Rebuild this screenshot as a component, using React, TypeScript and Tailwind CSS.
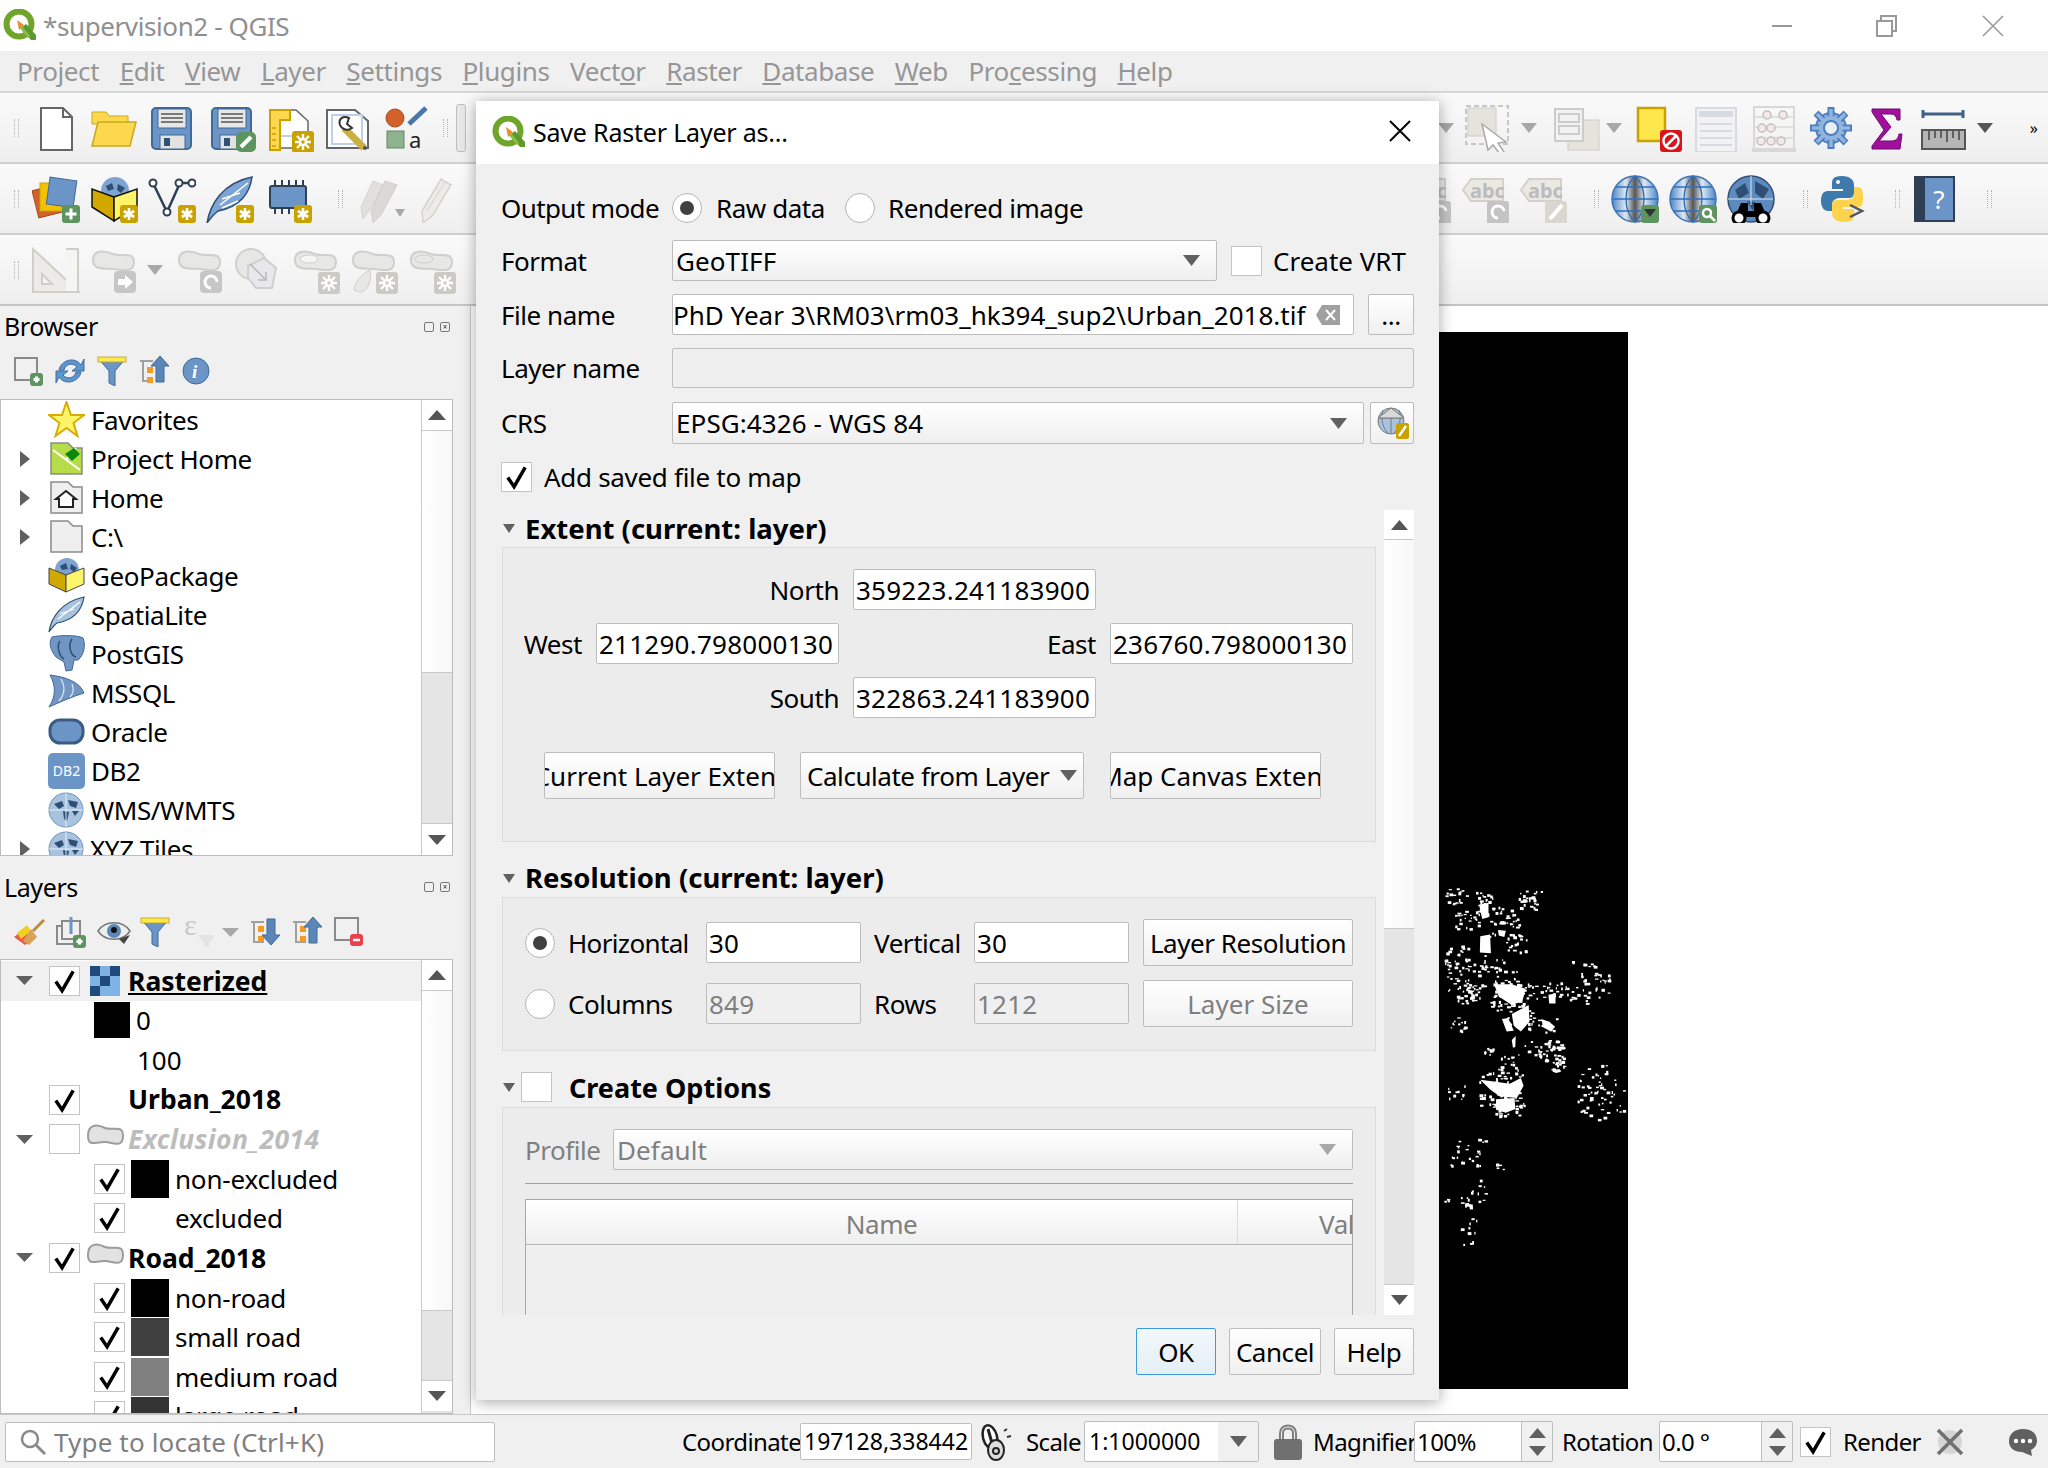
import type { ReactNode } from "react";

const FONT = "font-['Noto_Sans','Open_Sans',sans-serif]";

function Ic({ w = 48, h = 48, children, className = "" }: { w?: number; h?: number; children: ReactNode; className?: string }) {
  return (
    <svg width={w} height={h} viewBox={`0 0 ${w} ${h}`} className={`shrink-0 ${className}`} aria-hidden>
      {children}
    </svg>
  );
}

function Check({ size = 30 }: { size?: number }) {
  return (
    <svg width={size} height={size} viewBox="0 0 30 30" aria-hidden>
      <path d="M6 15.5L12.5 25L24 5" fill="none" stroke="#000" strokeWidth="3.6" />
    </svg>
  );
}

function CheckBox({ checked = false, className = "" }: { checked?: boolean; className?: string }) {
  return (
    <div className={`flex h-[30px] w-[31px] shrink-0 items-center justify-center border border-[#c4c4c4] bg-white ${className}`}>
      {checked && <Check />}
    </div>
  );
}

function Radio({ on = false }: { on?: boolean }) {
  return (
    <div className="flex h-[30px] w-[30px] shrink-0 items-center justify-center rounded-full border border-[#b5b5b5] bg-white">
      {on && <div className="h-[14px] w-[14px] rounded-full bg-[#404040]" />}
    </div>
  );
}

function Tri({ dir = "down", color = "#666", w = 16, h = 10 }: { dir?: "down" | "up" | "right"; color?: string; w?: number; h?: number }) {
  const pts = dir === "down" ? `0,0 ${w},0 ${w / 2},${h}` : dir === "up" ? `0,${h} ${w},${h} ${w / 2},0` : `0,0 ${w},${h / 2} 0,${h}`;
  return (
    <svg width={w} height={h} viewBox={`0 0 ${w} ${h}`} className="shrink-0" aria-hidden>
      <polygon points={pts} fill={color} />
    </svg>
  );
}

function Handle({ className = "" }: { className?: string }) {
  return <div className={`h-[18px] w-[5px] shrink-0 border-x border-dotted border-[#b5b5b5] ${className}`} />;
}

function QLogo({ size = 34 }: { size?: number }) {
  return (
    <svg width={size} height={size} viewBox="0 0 34 34" className="shrink-0" aria-hidden>
      <circle cx="16" cy="15" r="12.5" fill="none" stroke="#6fa52a" strokeWidth="6" />
      <path d="M18 19L28 31L33 31L33 26L23 15Z" fill="#5c9a2e" />
      <path d="M14 11L21 16L16 21Z" fill="#ef8c2c" />
      <path d="M18 18L26 28" stroke="#8dbb4a" strokeWidth="3" />
    </svg>
  );
}

function StarBadge({ x = 30, y = 30 }: { x?: number; y?: number }) {
  return (
    <g transform={`translate(${x} ${y})`}>
      <rect width="18" height="18" rx="3" fill="#c9a200" />
      <path d="M9 3V15M3.8 6L14.2 12M14.2 6L3.8 12" stroke="#fff" strokeWidth="2.6" />
    </g>
  );
}

function GearBadge({ x = 26, y = 26, bg = "#c9a200", size = 22 }: { x?: number; y?: number; bg?: string; size?: number }) {
  const c = size / 2;
  return (
    <g transform={`translate(${x} ${y})`}>
      <rect width={size} height={size} rx="3" fill={bg} />
      <path d={`M${c} 3V${size - 3}M3 ${c}H${size - 3}M5 5L${size - 5} ${size - 5}M${size - 5} 5L5 ${size - 5}`} stroke="#fff" strokeWidth="2.4" />
      <circle cx={c} cy={c} r="4" fill="#fff" />
      <circle cx={c} cy={c} r="1.8" fill={bg} />
    </g>
  );
}

function PlusBadge({ x = 30, y = 30, size = 18 }: { x?: number; y?: number; size?: number }) {
  const c = size / 2;
  return (
    <g transform={`translate(${x} ${y})`}>
      <rect width={size} height={size} rx="3" fill="#5e9460" />
      <path d={`M${c} 3.5V${size - 3.5}M3.5 ${c}H${size - 3.5}`} stroke="#fff" strokeWidth="3" />
    </g>
  );
}

function Floppy({ badge = false }: { badge?: boolean }) {
  return (
    <Ic>
      <rect x="4" y="4" width="39" height="41" rx="4" fill="#6b95c6" stroke="#3f6a99" strokeWidth="2" />
      <rect x="10" y="5" width="28" height="19" fill="#e8e8e8" stroke="#3f6a99" />
      <path d="M13 10H35M13 14H35M13 18H35" stroke="#555" strokeWidth="1.6" />
      <rect x="12" y="31" width="25" height="14" fill="#e2e2e2" stroke="#3f6a99" />
      <rect x="16" y="34" width="6" height="8" fill="#2f527a" />
      {badge && (
        <g>
          <rect x="28" y="28" width="20" height="20" rx="5" fill="#5e9460" />
          <path d="M33 43L43 33" stroke="#fff" strokeWidth="4" />
        </g>
      )}
    </Ic>
  );
}

function Blob({ fill = "#e7e7e5", stroke = "#cfcfcd", children }: { fill?: string; stroke?: string; children?: ReactNode }) {
  return (
    <Ic>
      <path d="M3 14C3 4 14 4 23 8C31 11 44 5 44 16C44 27 33 24 25 23C15 22 3 25 3 14Z" fill={fill} stroke={stroke} strokeWidth="2" />
      {children}
    </Ic>
  );
}

function Globe({ id, badge }: { id: string; badge?: ReactNode }) {
  return (
    <Ic>
      <defs>
        <linearGradient id={id} x1="0" x2="1">
          <stop offset="0" stopColor="#4c86c6" />
          <stop offset="0.3" stopColor="#dfe9f2" />
          <stop offset="0.5" stopColor="#555" />
          <stop offset="0.7" stopColor="#dfe9f2" />
          <stop offset="1" stopColor="#4c86c6" />
        </linearGradient>
      </defs>
      <circle cx="24" cy="24" r="23" fill={`url(#${id})`} stroke="#3f74b4" strokeWidth="1.5" />
      <path d="M24 1C12 12 12 36 24 47C36 36 36 12 24 1ZM2 24H46M5 12H43M5 36H43" fill="none" stroke="#2f6fc0" strokeWidth="1.4" />
      {badge}
    </Ic>
  );
}

function MapGlobe({ s = 28 }: { s?: number }) {
  return (
    <svg width={s} height={s} viewBox="0 0 36 36" className="shrink-0" aria-hidden>
      <circle cx="18" cy="18" r="17" fill="#a7c3e0" stroke="#6f93ba" />
      <path d="M6 12L14 9L16 14L11 17ZM20 8L30 10L28 16L22 14ZM15 19L21 20L19 29L16 27ZM24 19L31 19L27 24Z" fill="#2f4f75" />
      <path d="M18 1V35M1 18H35" stroke="#e4edf6" strokeWidth="1" />
    </svg>
  );
}

function Row1Left() {
  return (
    <>
      <Handle className="ml-[14px]" />
      <div className="ml-[13px] flex gap-[10px]">
        <Ic>
          <path d="M9 4H31L40 13V46H9Z" fill="#fff" stroke="#666" strokeWidth="2" />
          <path d="M31 4V13H40" fill="none" stroke="#666" strokeWidth="2" />
        </Ic>
        <Ic>
          <path d="M2 8H16L19 12H38V20H2Z" fill="#fdd84f" stroke="#c9a91a" />
          <path d="M2 42L8 18H46L40 42Z" fill="#fdd84f" stroke="#c9a91a" strokeWidth="1.5" />
        </Ic>
        <Floppy />
        <div className="ml-[2px]">
          <Floppy badge />
        </div>
        <Ic>
          <path d="M4 6H30L42 17V44H4Z" fill="#fff" stroke="#666" strokeWidth="1.5" />
          <path d="M8 32H36" stroke="#bcd0ee" strokeWidth="2" />
          <path d="M4 6H24V16H14V46H4Z" fill="#fdd84f" stroke="#c9a200" strokeWidth="2" />
          <path d="M6 24H10M6 30H10M6 36H10M6 42H10" stroke="#c9a200" strokeWidth="1.5" />
          <GearBadge x={26} y={27} />
        </Ic>
        <Ic>
          <path d="M3 6H31L44 17V44H3Z" fill="#fff" stroke="#666" strokeWidth="2" />
          <rect x="8" y="11" width="30" height="29" fill="none" stroke="#bcd0ee" strokeWidth="2" />
          <path d="M20 24L40 44" stroke="#c9b040" strokeWidth="7" />
          <path d="M25 14C19 11 14 15 16 21C18 26 24 27 28 24L23 20L25 14Z" fill="#fff" stroke="#333" strokeWidth="2" />
          <circle cx="41" cy="44" r="2" fill="#555" />
        </Ic>
        <Ic>
          <circle cx="13" cy="14" r="9" fill="#d2622c" stroke="#a94c1f" />
          <path d="M27 20L44 4" stroke="#4a76ab" strokeWidth="5" />
          <rect x="5" y="27" width="17" height="17" fill="#8fb38f" stroke="#5e8a5e" />
          <text x="27" y="44" fontSize="22" fontFamily="Noto Sans" fill="#222">a</text>
        </Ic>
      </div>
      <Handle className="ml-[13px]" />
      <div className="ml-[8px] h-[48px] w-[10px] rounded-[3px] border border-[#bdbdbd] bg-[#e8e8e8]" />
    </>
  );
}

function Row1Right() {
  return (
    <div className="ml-auto mr-[10px] flex items-center">
      <Tri color="#a8a8a8" />
      <div className="ml-[10px]">
        <Ic>
          <rect x="2" y="2" width="42" height="38" fill="none" stroke="#c7c7c7" strokeWidth="2" strokeDasharray="5 3" />
          <rect x="4" y="4" width="28" height="28" fill="#e4e3dc" stroke="#ccc" />
          <path d="M18 20L42 38L34 39L40 48L36 50L29 41L24 46Z" fill="#fff" stroke="#aaa" strokeWidth="1.5" />
        </Ic>
      </div>
      <div className="ml-[9px]">
        <Tri color="#a8a8a8" />
      </div>
      <div className="ml-[16px]">
        <Ic>
          <rect x="15" y="16" width="31" height="30" fill="#e4e3dc" stroke="#ccc" />
          <rect x="2" y="5" width="28" height="32" fill="#f2f2f2" stroke="#ccc" strokeWidth="2" />
          <rect x="6" y="10" width="20" height="8" fill="none" stroke="#ccc" strokeWidth="2" />
          <rect x="6" y="22" width="20" height="8" fill="none" stroke="#ccc" strokeWidth="2" />
        </Ic>
      </div>
      <div className="ml-[5px]">
        <Tri color="#a8a8a8" />
      </div>
      <div className="ml-[14px]">
        <Ic>
          <rect x="2" y="4" width="27" height="33" fill="#fde74c" stroke="#c9a200" strokeWidth="2.5" />
          <rect x="24" y="26" width="22" height="22" rx="3" fill="#d8141c" />
          <circle cx="35" cy="37" r="7.5" fill="none" stroke="#fff" strokeWidth="2.5" />
          <path d="M30 42L40 32" stroke="#fff" strokeWidth="2.5" />
        </Ic>
      </div>
      <div className="ml-[8px]">
        <Ic>
          <rect x="4" y="4" width="40" height="44" fill="#f2f2f2" stroke="#d5dbe0" strokeWidth="2" />
          <rect x="7" y="7" width="34" height="6" fill="#d5dbe0" />
          <path d="M8 20H40M8 27H40M8 34H40M8 41H40" stroke="#d5dbe0" strokeWidth="2" />
        </Ic>
      </div>
      <div className="ml-[11px]">
        <Ic>
          <rect x="3" y="3" width="40" height="42" fill="none" stroke="#d8d8d8" strokeWidth="2" />
          <path d="M3 13H43M3 23H43M3 34H43" stroke="#d8d8d8" strokeWidth="1.5" />
          <circle cx="16" cy="11" r="4" fill="#f0eaea" stroke="#c9bcbc" strokeWidth="1.5" />
          <circle cx="32" cy="11" r="4" fill="#f0eaea" stroke="#c9bcbc" strokeWidth="1.5" />
          <circle cx="11" cy="24" r="4" fill="#f0eaea" stroke="#c9bcbc" strokeWidth="1.5" />
          <circle cx="20" cy="24" r="4" fill="#f0eaea" stroke="#c9bcbc" strokeWidth="1.5" />
          <circle cx="10" cy="37" r="4" fill="#f0eaea" stroke="#c9bcbc" strokeWidth="1.5" />
          <circle cx="20" cy="37" r="4" fill="#f0eaea" stroke="#c9bcbc" strokeWidth="1.5" />
          <circle cx="30" cy="37" r="4" fill="#f0eaea" stroke="#c9bcbc" strokeWidth="1.5" />
          <rect x="1" y="44" width="44" height="4" fill="#d8d8d8" />
        </Ic>
      </div>
      <div className="ml-[8px]">
        <Ic>
          <circle cx="24" cy="24" r="15" fill="#91b5e0" stroke="#4d7fbd" strokeWidth="2" />
          <path d="M24 3V45M3 24H45M9 9L39 39M39 9L9 39" stroke="#4d7fbd" strokeWidth="7" />
          <path d="M24 5V43M5 24H43M10 10L38 38M38 10L10 38" stroke="#91b5e0" strokeWidth="3.5" />
          <circle cx="24" cy="24" r="12" fill="#91b5e0" />
          <circle cx="24" cy="24" r="7" fill="#e8eef6" stroke="#4d7fbd" strokeWidth="2" />
        </Ic>
      </div>
      <div className="ml-[14px]">
        <Ic w={36}>
          <path d="M3 5H31V16H28C27 11 25 10 20 10H12L22 23L10 37H22C27 37 29 35 30 30H33L31 45H3V42L15 26L3 8Z" fill="#a0109c" stroke="#6e0a6c" />
        </Ic>
      </div>
      <div className="ml-[14px]">
        <Ic>
          <path d="M4 6V14M44 6V14M4 10H44" stroke="#3f6185" strokeWidth="3" />
          <rect x="3" y="26" width="43" height="19" fill="#b5b5b5" stroke="#555" strokeWidth="2" />
          <path d="M10 27V36M16 27V34M22 27V34M28 27V38M34 27V34M40 27V36" stroke="#444" strokeWidth="1.5" />
        </Ic>
      </div>
      <div className="ml-[10px]">
        <Tri color="#555" />
      </div>
      <span className="ml-[37px] text-[16px] leading-none text-black">»</span>
    </div>
  );
}

function Row2Left() {
  return (
    <>
      <Handle className="ml-[14px]" />
      <div className="ml-[13px] flex gap-[10px]">
        <Ic>
          <rect x="3" y="12" width="28" height="28" fill="#d2622c" stroke="#a94c1f" transform="rotate(-14 17 26)" />
          <rect x="8" y="8" width="28" height="28" fill="#f2c200" stroke="#c9a200" />
          <rect x="16" y="4" width="27" height="27" fill="#6b95c6" stroke="#3f6a99" transform="rotate(8 30 18)" />
          <PlusBadge x={30} y={30} />
        </Ic>
        <Ic>
          <circle cx="25" cy="16" r="14" fill="#7da4d2" />
          <path d="M16 11L22 8L24 14L18 16ZM28 9L35 13L31 18L27 15Z" fill="#2f4f75" />
          <path d="M24 22L2 14V32L24 46Z" fill="#d1a800" stroke="#111" strokeWidth="1.5" />
          <path d="M24 22L47 14V32L24 46Z" fill="#fdf46a" stroke="#111" strokeWidth="1.5" />
          <StarBadge x={30} y={30} />
        </Ic>
        <Ic>
          <path d="M5 8L19 37L32 8L46 8" fill="none" stroke="#2f3f55" strokeWidth="2.5" />
          <circle cx="5" cy="8" r="3.5" fill="#fff" stroke="#2f3f55" strokeWidth="2" />
          <circle cx="19" cy="37" r="3.5" fill="#fff" stroke="#2f3f55" strokeWidth="2" />
          <circle cx="31" cy="8" r="3.5" fill="#fff" stroke="#2f3f55" strokeWidth="2" />
          <circle cx="44" cy="8" r="3.5" fill="#fff" stroke="#2f3f55" strokeWidth="2" />
          <StarBadge x={30} y={30} />
        </Ic>
        <Ic>
          <path d="M1 48C4 30 16 8 46 2C44 18 34 32 12 36C8 39 5 42 1 48Z" fill="#7da4d2" stroke="#2f4f75" strokeWidth="1.5" />
          <path d="M14 30L42 8M16 24L34 18M16 33L32 26" stroke="#fff" strokeWidth="1.5" />
          <StarBadge x={30} y={30} />
        </Ic>
        <Ic>
          <rect x="6" y="11" width="36" height="22" rx="2" fill="#6b95c6" stroke="#2f3f55" strokeWidth="2" />
          <path d="M11 5V11M18 5V11M25 5V11M32 5V11M39 5V11M11 33V39M18 33V39M25 33V39" stroke="#2f3f55" strokeWidth="2" />
          <StarBadge x={30} y={30} />
        </Ic>
      </div>
      <Handle className="ml-[26px]" />
      <div className="ml-[14px]">
        <Ic>
          <path d="M6 44L4 32L16 6L26 10L12 36Z" fill="#e2e0dc" stroke="#d5d3cf" />
          <path d="M16 48L14 36L28 6L40 10L24 40Z" fill="#dbd9d5" stroke="#d0cecb" />
          <path d="M38 34H48L43 42Z" fill="#a8a8a8" />
        </Ic>
      </div>
      <div className="ml-[14px]">
        <Ic w={36}>
          <path d="M4 48L3 36L22 4L32 10L14 40Z" fill="#ecebe6" stroke="#d5d3cf" strokeWidth="1.5" />
          <path d="M8 36L26 7" stroke="#d5d3cf" />
        </Ic>
      </div>
    </>
  );
}

function Abc({ badge }: { badge: ReactNode }) {
  return (
    <Ic>
      <path d="M10 4H42V26H10L2 15Z" fill="#ebe9e3" stroke="#d3d1cb" strokeWidth="2" />
      <text x="9" y="23" fontSize="20" fontFamily="Noto Sans" fontWeight="700" fill="#bcbcbc">abc</text>
      {badge}
    </Ic>
  );
}

function Row2Right() {
  const spin = (
    <g>
      <rect x="26" y="26" width="22" height="26" rx="3" fill="#c4c4c4" />
      <path d="M43 36A6 6 0 1 0 37 43" fill="none" stroke="#fff" strokeWidth="3" />
    </g>
  );
  return (
    <div className="ml-auto flex items-center">
      <Abc badge={spin} />
      <div className="ml-[10px]">
        <Abc badge={spin} />
      </div>
      <div className="ml-[10px]">
        <Abc
          badge={
            <g>
              <rect x="26" y="26" width="22" height="26" rx="3" fill="#d8d6d0" />
              <path d="M31 44L43 30" stroke="#fff" strokeWidth="4" />
            </g>
          }
        />
      </div>
      <Handle className="ml-[27px]" />
      <div className="ml-[12px] flex gap-[10px]">
        <Globe
          id="g1"
          badge={
            <g>
              <rect x="30" y="30" width="18" height="18" rx="3" fill="#5e9460" />
              <path d="M33 34H45L39 42Z" fill="#333" />
            </g>
          }
        />
        <Globe
          id="g2"
          badge={
            <g>
              <rect x="30" y="30" width="18" height="18" rx="3" fill="#5e9460" />
              <circle cx="38" cy="38" r="4" fill="none" stroke="#fff" strokeWidth="2.5" />
              <path d="M41 41L46 46" stroke="#fff" strokeWidth="2.5" />
            </g>
          }
        />
        <Ic>
          <circle cx="24" cy="24" r="23" fill="#5e8bbd" stroke="#2f4f75" strokeWidth="1.5" />
          <path d="M8 15L18 8L22 18L12 24ZM28 6L42 14L36 24L28 18ZM20 26L28 27L26 36Z" fill="#2f4f75" />
          <path d="M24 1V30M1 24H46" stroke="#dce7f2" />
          <path d="M14 28H21V36H27V28H34L40 42H8Z" fill="#000" />
          <circle cx="12" cy="43" r="6" fill="#fff" stroke="#000" strokeWidth="3" />
          <circle cx="36" cy="43" r="6" fill="#fff" stroke="#000" strokeWidth="3" />
        </Ic>
      </div>
      <Handle className="ml-[28px]" />
      <div className="ml-[12px]">
        <Ic>
          <path d="M22 1C12 1 12 5 12 10V14H23V16H8C3 16 1 20 1 26C1 32 4 36 8 36H12V30C12 25 16 23 20 23H29C32 23 34 21 34 18V10C34 5 30 1 22 1Z" fill="#3d79ab" />
          <circle cx="18" cy="7" r="2" fill="#fff" />
          <path d="M24 47C34 47 34 43 34 38V34H23V32H38C43 32 43 28 43 22C43 16 42 12 38 12H34V18C34 23 30 25 26 25H17C14 25 12 27 12 30V38C12 43 16 47 24 47Z" fill="#fdd24d" />
          <path d="M30 30L42 36L30 42" fill="none" stroke="#555" strokeWidth="2.5" />
        </Ic>
      </div>
      <Handle className="ml-[27px]" />
      <div className="ml-[14px] flex h-[46px] w-[41px] border-2 border-[#2f3f55] bg-[#6b95c6]">
        <div className="h-full w-[9px] bg-[#2f3f55]" />
        <div className="flex-1 text-center text-[26px] leading-[42px] text-white">?</div>
      </div>
      <Handle className="ml-[32px] mr-[56px]" />
    </div>
  );
}

function Row3() {
  return (
    <>
      <Handle className="ml-[14px]" />
      <div className="ml-[13px]">
        <Ic>
          <path d="M1 3V46H47Z" fill="#ecebe6" stroke="#d0cec9" strokeWidth="2" />
          <path d="M10 28V38H20Z" fill="#f5f5f5" stroke="#d0cec9" strokeWidth="2" />
          <path d="M34 3H46V46H34" fill="#f5f5f2" stroke="#d0cec9" strokeWidth="2" />
        </Ic>
      </div>
      <div className="ml-[10px]">
        <Blob>
          <rect x="24" y="25" width="22" height="22" rx="4" fill="#c6c6c6" />
          <path d="M28 33H35V29L43 36L35 43V39H28Z" fill="#fff" />
        </Blob>
      </div>
      <div className="ml-[9px]">
        <Tri color="#a8a8a8" />
      </div>
      <div className="ml-[13px]">
        <Blob>
          <rect x="24" y="25" width="22" height="22" rx="4" fill="#c6c6c6" />
          <path d="M41 36A6 6 0 1 0 35 42" fill="none" stroke="#fff" strokeWidth="3" />
        </Blob>
      </div>
      <div className="ml-[10px]">
        <Ic>
          <circle cx="17" cy="18" r="15" fill="#e7e7e5" stroke="#cfcfcd" strokeWidth="2" />
          <path d="M14 20L30 12L42 22L38 42H22L14 32Z" fill="#e8e8ea" stroke="#cfcfd2" strokeWidth="2" />
          <path d="M16 18L32 34M32 26V34H24" fill="none" stroke="#b8b8b8" strokeWidth="1.5" />
        </Ic>
      </div>
      <div className="ml-[10px]">
        <Blob>
          <ellipse cx="17" cy="13" rx="9" ry="4" fill="#f5f5f5" stroke="#cfcfcd" />
          <GearBadge x={26} y={26} bg="#cbcac4" />
        </Blob>
      </div>
      <div className="ml-[10px]">
        <Blob>
          <path d="M4 44C4 36 12 28 20 24C22 34 18 46 10 46Z" fill="#e7e7e5" stroke="#cfcfcd" />
          <GearBadge x={26} y={26} bg="#cbcac4" />
        </Blob>
      </div>
      <div className="ml-[10px]">
        <Blob>
          <ellipse cx="16" cy="13" rx="9" ry="4" fill="#e7e7e5" stroke="#cfcfcd" />
          <GearBadge x={26} y={26} bg="#cbcac4" />
        </Blob>
      </div>
    </>
  );
}

function ScrollBar({ upH, thumbH, trackH, downH }: { upH: string; thumbH: string; trackH: string; downH: string }) {
  return (
    <div className="flex h-full w-[31px] shrink-0 flex-col border-l border-[#c8c8c8] bg-[#e5e5e5]">
      <div className={`flex ${upH} items-center justify-center border-b border-[#c8c8c8] bg-white`}>
        <Tri dir="up" color="#555" w={18} h={10} />
      </div>
      <div className={`${thumbH} bg-gradient-to-r from-white to-[#f7f7f7] border-b border-[#c8c8c8]`} />
      <div className={trackH} />
      <div className={`flex ${downH} items-center justify-center border-t border-[#c8c8c8] bg-white`}>
        <Tri dir="down" color="#555" w={18} h={10} />
      </div>
    </div>
  );
}

function DockTitle({ title, className = "" }: { title: string; className?: string }) {
  return (
    <div className={`flex items-center justify-between pl-[4px] pr-[16px] ${className}`}>
      <span className="text-[25px] leading-none tracking-[-0.4px] text-black">{title}</span>
      <div className="flex gap-[6px]">
        <div className="h-[10px] w-[10px] rounded-[2px] border border-[#777]" />
        <div className="flex h-[10px] w-[10px] items-center justify-center rounded-[2px] border border-[#777] text-[8px] leading-none text-[#333]">×</div>
      </div>
    </div>
  );
}

const browserItems: { label: string; arrow?: boolean; icon: ReactNode }[] = [
  {
    label: "Favorites",
    icon: (
      <Ic w={37} h={37}>
        <path d="M18.5 1L23 14H36L25.5 22L29.5 35L18.5 27L7.5 35L11.5 22L1 14H14Z" fill="#fdf46a" stroke="#d8ac00" strokeWidth="2" />
      </Ic>
    ),
  },
  {
    label: "Project Home",
    arrow: true,
    icon: (
      <Ic w={37} h={37}>
        <path d="M3 3H20L25 8H34V34H3Z" fill="#b7dc4a" stroke="#8a8a8a" strokeWidth="1.5" />
        <path d="M5 10L32 30M18 20L28 8" stroke="#fff" strokeWidth="2" />
        <path d="M17 14L26 8L32 14L24 21Z" fill="#0a8a0a" />
      </Ic>
    ),
  },
  {
    label: "Home",
    arrow: true,
    icon: (
      <Ic w={37} h={37}>
        <path d="M3 3H20L25 8H34V34H3Z" fill="#efefef" stroke="#8a8a8a" strokeWidth="1.5" />
        <path d="M11 28V20H8L18 12L28 20H25V28Z" fill="#fff" stroke="#222" strokeWidth="2" />
      </Ic>
    ),
  },
  {
    label: "C:\\",
    arrow: true,
    icon: (
      <Ic w={37} h={37}>
        <path d="M3 3H20L25 8H34V34H3Z" fill="#efefef" stroke="#8a8a8a" strokeWidth="1.5" />
      </Ic>
    ),
  },
  {
    label: "GeoPackage",
    icon: (
      <Ic w={37} h={37}>
        <circle cx="19" cy="13" r="12" fill="#7da4d2" />
        <path d="M12 9L18 6L20 12L14 13ZM23 7L29 11L26 15L22 12Z" fill="#2f4f75" />
        <path d="M18 18L1 11V27L18 35Z" fill="#d1a800" stroke="#444" />
        <path d="M18 18L36 11V27L18 35Z" fill="#fdf46a" stroke="#444" />
      </Ic>
    ),
  },
  {
    label: "SpatiaLite",
    icon: (
      <Ic w={37} h={37}>
        <path d="M1 36C3 22 13 6 36 1C34 14 26 24 9 27C6 29 4 32 1 36Z" fill="#a7c3e0" stroke="#2f4f75" strokeWidth="1.2" />
        <path d="M10 23L32 6M12 18L26 13" stroke="#fff" strokeWidth="1.2" />
      </Ic>
    ),
  },
  {
    label: "PostGIS",
    icon: (
      <Ic w={37} h={37}>
        <path d="M4 2C12 0 30 0 35 3C38 10 36 20 30 25L26 25L24 35L18 36L16 27L8 22C3 16 0 8 4 2Z" fill="#7196c4" stroke="#3f6a99" />
        <path d="M12 6C8 12 12 22 16 24M24 4C20 10 22 20 28 22" fill="none" stroke="#2f4f75" strokeWidth="1.5" />
      </Ic>
    ),
  },
  {
    label: "MSSQL",
    icon: (
      <Ic w={37} h={37}>
        <path d="M2 1C18 3 32 8 36 19C26 22 12 28 1 33C8 22 8 12 2 1Z" fill="#7196c4" stroke="#3f6a99" />
        <path d="M13 5C17 12 17 20 11 27M24 10C26 15 26 19 22 23" fill="none" stroke="#dde8f2" strokeWidth="1.2" />
      </Ic>
    ),
  },
  {
    label: "Oracle",
    icon: (
      <Ic w={37} h={37}>
        <rect x="2" y="7" width="33" height="23" rx="10" fill="#6b95c6" stroke="#3f5a80" strokeWidth="3" />
      </Ic>
    ),
  },
  {
    label: "DB2",
    icon: (
      <div className="flex h-[36px] w-[37px] shrink-0 items-center justify-center rounded-[5px] bg-[#6b95c6] text-[14px] leading-none text-white">DB2</div>
    ),
  },
  { label: "WMS/WMTS", icon: <MapGlobe s={36} /> },
  { label: "XYZ Tiles", arrow: true, icon: <MapGlobe s={36} /> },
];

function BrowserDock() {
  return (
    <div className="shrink-0">
      <DockTitle title="Browser" className="h-[41px]" />
      <div className="flex h-[52px] items-center gap-[12px] pb-[4px] pl-[13px]">
        <Ic w={30} h={30}>
          <rect x="2" y="2" width="22" height="22" fill="none" stroke="#8a8a8a" strokeWidth="2" />
          <PlusBadge x={17} y={17} size={13} />
        </Ic>
        <Ic w={30} h={30}>
          <path d="M4 14C6 4 20 0 26 9L29 3V15H17L22 11C18 6 10 8 9 14Z" fill="#5c96d0" stroke="#3f6a99" />
          <path d="M26 16C24 26 10 30 4 21L1 27V15H13L8 19C12 24 20 22 21 16Z" fill="#5c96d0" stroke="#3f6a99" />
        </Ic>
        <Ic w={30} h={30}>
          <path d="M1 2H29L18 15V30L12 27V15Z" fill="#6b95c6" stroke="#3f6a99" />
          <rect x="1" y="1" width="28" height="5" fill="#fde74c" stroke="#b9a020" strokeWidth="0.8" />
        </Ic>
        <Ic w={30} h={30}>
          <path d="M1 5H14M4 5V25H14" fill="none" stroke="#a0a0a0" strokeWidth="2" />
          <rect x="8" y="11" width="6" height="6" fill="#f59a23" />
          <rect x="8" y="21" width="6" height="6" fill="#f59a23" />
          <path d="M21 0L30 10H25V26H17V10H12Z" fill="#5c86b8" stroke="#3f6a99" />
        </Ic>
        <Ic w={30} h={30}>
          <circle cx="15" cy="15" r="13" fill="#6b95c6" stroke="#3f6a99" />
          <text x="11" y="22" fontSize="19" fontStyle="italic" fontWeight="700" fontFamily="Liberation Serif" fill="#fff">i</text>
        </Ic>
      </div>
      <div className="ml-0 flex h-[457px] w-[453px] overflow-hidden border border-[#bcbcbc] bg-white">
        <div className="flex-1 overflow-hidden">
          {browserItems.map((it) => (
            <div key={it.label} className="flex h-[39px] items-center">
              <div className="flex w-[47px] shrink-0 justify-center">{it.arrow && <Tri dir="right" color="#606060" w={10} h={16} />}</div>
              {it.icon}
              <span className="ml-[6px] text-[26px] leading-none tracking-[-0.4px] text-black">{it.label}</span>
            </div>
          ))}
        </div>
        <ScrollBar upH="h-[31px]" thumbH="h-[242px]" trackH="h-[150px]" downH="h-[32px]" />
      </div>
    </div>
  );
}

function Symbol({ check = true, color, label }: { check?: boolean; color?: string; label: string }) {
  return (
    <div className="flex h-[39.6px] items-center">
      <div className="ml-[93px]">
        <CheckBox checked={check} />
      </div>
      <div className={`ml-[6px] h-[38px] w-[38px] ${color ?? ""}`} />
      <span className="ml-[6px] text-[26px] leading-none tracking-[-0.2px] text-black">{label}</span>
    </div>
  );
}

function LayerRow({ arrow, check, icon, label, className = "", labelClass = "text-black" }: { arrow?: boolean; check: boolean; icon?: ReactNode; label: string; className?: string; labelClass?: string }) {
  return (
    <div className={`flex h-[39.6px] items-center ${className}`}>
      <div className="ml-[14px] flex w-[18px] justify-center">{arrow && <Tri color="#606060" w={17} h={9} />}</div>
      <div className="ml-[16px]">
        <CheckBox checked={check} />
      </div>
      <div className="ml-[6px] flex w-[38px] justify-center">{icon}</div>
      <span className={`ml-[4px] text-[26.5px] leading-none font-bold ${labelClass}`}>{label}</span>
    </div>
  );
}

function SmallBlob() {
  return (
    <Ic w={37} h={26} className="-mt-[6px]">
      <path d="M1 13C1 1 10 1 18 5C26 8 36 1 36 13C36 25 26 20 19 19C11 18 1 25 1 13Z" fill="#e2e2e2" stroke="#9c9c9c" strokeWidth="2" />
    </Ic>
  );
}

function LayersDock() {
  return (
    <div className="flex min-h-0 flex-1 flex-col">
      <DockTitle title="Layers" className="mt-[11px] h-[40px]" />
      <div className="flex h-[52px] items-center pb-[2px] pl-[13px]">
        <Ic w={32} h={30}>
          <path d="M1 20L14 10L22 22L12 28Z" fill="#e85a4a" />
          <path d="M4 16L14 8L18 14L8 22Z" fill="#f2d020" />
          <path d="M10 24L18 12L24 20L16 28Z" fill="#d9a25a" />
          <path d="M20 14L31 3" stroke="#c08a3a" strokeWidth="3" />
        </Ic>
        <div className="ml-[11px]">
          <Ic w={30} h={32}>
            <rect x="1" y="10" width="18" height="18" fill="none" stroke="#8a8a8a" strokeWidth="2" />
            <rect x="6" y="5" width="18" height="18" fill="#f0f0f0" stroke="#8a8a8a" strokeWidth="2" />
            <path d="M15 1V18" stroke="#6b95c6" strokeWidth="3" />
            <PlusBadge x={17} y={19} size={13} />
          </Ic>
        </div>
        <div className="ml-[11px]">
          <Ic w={34} h={30}>
            <path d="M1 14C8 3 26 3 33 14C26 25 8 25 1 14Z" fill="#eee" stroke="#777" strokeWidth="1.5" />
            <circle cx="17" cy="14" r="7" fill="#5c86b8" />
            <circle cx="17" cy="13" r="3" fill="#111" />
            <path d="M22 22L33 18L27 27Z" fill="#444" />
          </Ic>
        </div>
        <div className="ml-[9px]">
          <Ic w={30} h={30}>
            <path d="M1 2H29L18 15V30L12 27V15Z" fill="#6b95c6" stroke="#3f6a99" />
            <rect x="1" y="1" width="28" height="5" fill="#fde74c" stroke="#b9a020" strokeWidth="0.8" />
          </Ic>
        </div>
        <div className="ml-[14px]">
          <Ic w={32} h={30}>
            <text x="0" y="18" fontSize="30" fontFamily="Liberation Serif" fill="#c8c8c8">ε</text>
            <path d="M14 18H31L25 26V30H20V26Z" fill="#e4e4e4" />
          </Ic>
        </div>
        <div className="ml-[6px]">
          <Tri color="#a8a8a8" w={17} h={9} />
        </div>
        <div className="ml-[11px]">
          <Ic w={30} h={30}>
            <path d="M1 5H14M4 5V25H14" fill="none" stroke="#a0a0a0" strokeWidth="2" />
            <rect x="8" y="9" width="6" height="6" fill="#f59a23" />
            <rect x="8" y="19" width="6" height="6" fill="#f59a23" />
            <path d="M21 28L30 18H25V2H17V18H12Z" fill="#5c86b8" stroke="#3f6a99" />
          </Ic>
        </div>
        <div className="ml-[12px]">
          <Ic w={30} h={30}>
            <path d="M1 5H14M4 5V25H14" fill="none" stroke="#a0a0a0" strokeWidth="2" />
            <rect x="8" y="9" width="6" height="6" fill="#f59a23" />
            <rect x="8" y="19" width="6" height="6" fill="#f59a23" />
            <path d="M21 0L30 10H25V26H17V10H12Z" fill="#5c86b8" stroke="#3f6a99" />
          </Ic>
        </div>
        <div className="ml-[12px]">
          <Ic w={30} h={30}>
            <rect x="1" y="1" width="23" height="22" fill="none" stroke="#8a8a8a" strokeWidth="2" />
            <rect x="16" y="17" width="13" height="12" rx="3" fill="#e8424a" />
            <path d="M19 23H26" stroke="#fff" strokeWidth="2.5" />
          </Ic>
        </div>
      </div>
      <div className="flex min-h-0 w-[453px] flex-1 overflow-hidden border border-[#bcbcbc] bg-white">
        <div className="flex-1 overflow-hidden pt-[1px]">
          <LayerRow
            arrow
            check
            label="Rasterized"
            className="bg-[#f0f0f0]"
            labelClass="text-black underline"
            icon={
              <svg width="30" height="30" viewBox="0 0 3 3" className="shrink-0" aria-hidden>
                <rect width="3" height="3" fill="#7fb3e6" />
                <rect width="1" height="1" fill="#204a7c" />
                <rect x="2" width="1" height="1" fill="#204a7c" />
                <rect x="1" y="1" width="1" height="1" fill="#204a7c" />
                <rect y="2" width="1" height="1" fill="#204a7c" />
              </svg>
            }
          />
          <div className="flex h-[39.6px] items-center">
            <div className="ml-[93px] h-[36px] w-[36px] bg-black" />
            <span className="ml-[6px] text-[26px] leading-none text-black">0</span>
          </div>
          <div className="flex h-[39.6px] items-center">
            <span className="ml-[136px] text-[26px] leading-none text-black">100</span>
          </div>
          <LayerRow check label="Urban_2018" />
          <LayerRow arrow check={false} label="Exclusion_2014" icon={<SmallBlob />} labelClass="italic text-[#bcbcbc] tracking-[0.4px]" />
          <Symbol color="bg-black" label="non-excluded" />
          <Symbol label="excluded" />
          <LayerRow arrow check label="Road_2018" icon={<SmallBlob />} />
          <Symbol color="bg-black" label="non-road" />
          <Symbol color="bg-[#404040]" label="small road" />
          <Symbol color="bg-[#808080]" label="medium road" />
          <Symbol color="bg-[#333333]" label="large road" />
        </div>
        <ScrollBar upH="h-[31px]" thumbH="h-[320px]" trackH="h-[69px]" downH="h-[31px]" />
      </div>
    </div>
  );
}

const BIG_BLOBS: string[] = [
  "125,194 150,190 152,238 124,236",
  "122,112 146,108 146,145 130,150",
  "160,318 205,318 240,330 232,362 205,372 172,350",
  "205,395 248,372 250,415 228,440 210,425",
  "180,408 196,405 210,438 192,440",
  "280,408 300,415 315,428 305,440 285,430",
  "125,565 165,570 200,575 228,560 235,580 218,612 175,608 150,590",
  "165,615 212,612 214,640 190,650 165,642",
  "298,345 316,342 316,368 300,368",
  "170,178 190,180 186,196 172,192",
  "205,462 215,452 214,480 208,482",
];
const CLUSTERS: number[][] = [
  [60, 90, 30, 16], [135, 90, 25, 14], [250, 100, 30, 28], [190, 140, 30, 20], [90, 150, 30, 22], [180, 190, 45, 20],
  [220, 215, 30, 14], [60, 245, 35, 24], [90, 300, 50, 40], [155, 265, 30, 12], [190, 295, 30, 16], [95, 345, 30, 28],
  [320, 330, 25, 14], [365, 345, 30, 12], [415, 320, 40, 24], [400, 280, 20, 12], [60, 418, 25, 12], [145, 490, 12, 10],
  [300, 490, 35, 44], [322, 530, 18, 18], [195, 525, 28, 16], [160, 550, 20, 8], [420, 565, 50, 26], [430, 618, 60, 34],
  [60, 595, 25, 10], [90, 755, 50, 26], [90, 880, 16, 12], [120, 860, 22, 6], [175, 788, 10, 4], [130, 830, 12, 3],
  [95, 940, 25, 7], [92, 985, 14, 3], [40, 870, 10, 3], [270, 340, 25, 10], [240, 480, 25, 6], [350, 255, 10, 2],
  // rough edges around the solid patches
  [200, 345, 50, 40], [225, 410, 35, 24], [180, 590, 60, 40], [190, 630, 35, 18], [295, 425, 24, 12], [137, 128, 20, 12],
];

function rasterDots() {
  let seed = 12345;
  const rnd = () => {
    seed = (seed * 1103515245 + 12345) & 0x7fffffff;
    return seed / 0x7fffffff;
  };
  const dots: { x: number; y: number; w: number; h: number }[] = [];
  for (const [cx, cy, spread, n] of CLUSTERS) {
    for (let i = 0; i < n; i++) {
      dots.push({
        x: cx + (rnd() - 0.5) * 2 * spread,
        y: cy + (rnd() - 0.5) * 2 * spread * 0.8,
        w: 3 + rnd() * 7,
        h: 3 + rnd() * 5,
      });
    }
  }
  return dots;
}

function Raster() {
  const dots = rasterDots();
  return (
    <div className="absolute left-[900px] top-[26px] h-[1057px] w-[257px] bg-black">
      <svg width="197" height="528" viewBox="0 0 500 1363" preserveAspectRatio="none" className="absolute bottom-0 right-0" aria-hidden>
        {BIG_BLOBS.map((p) => (
          <polygon key={p} points={p} fill="#fff" />
        ))}
        {dots.map((d, i) => (
          <rect key={i} x={d.x} y={d.y} width={d.w} height={d.h} fill="#fff" />
        ))}
      </svg>
    </div>
  );
}

function Input({ value, w, disabled }: { value?: string; w: string; disabled?: boolean }) {
  return (
    <div
      className={`flex h-[41px] shrink-0 items-center overflow-hidden rounded-[2px] border border-[#bdbdbd] pl-[2px] text-[26px] leading-none tracking-[0.25px] whitespace-nowrap ${w} ${
        disabled ? "bg-[#efefef] text-[#7f7f7f]" : "bg-white text-black"
      }`}
    >
      {value}
    </div>
  );
}

function Button({ label, w, h = "h-[47px]", disabled, className = "" }: { label: string; w: string; h?: string; disabled?: boolean; className?: string }) {
  return (
    <div
      className={`flex shrink-0 items-center justify-center overflow-hidden rounded-[2px] border border-[#bdbdbd] bg-gradient-to-b from-white to-[#f0f0f0] text-[26px] leading-none whitespace-nowrap ${w} ${h} ${
        disabled ? "text-[#7f7f7f]" : "text-black"
      } ${className}`}
    >
      {label}
    </div>
  );
}

function Combo({ value, w, h = "h-[41px]", disabled }: { value: string; w: string; h?: string; disabled?: boolean }) {
  return (
    <div
      className={`flex ${h} ${w} shrink-0 items-center justify-between rounded-[2px] border border-[#bdbdbd] bg-gradient-to-b from-white to-[#efefef] pl-[3px] pr-[16px] text-[26px] leading-none tracking-[0.1px] ${
        disabled ? "text-[#7f7f7f]" : "text-black"
      }`}
    >
      <span>{value}</span>
      <Tri color={disabled ? "#a8a8a8" : "#606060"} w={17} h={11} />
    </div>
  );
}

function SectionHead({ label, className = "" }: { label: string; className?: string }) {
  return (
    <div className={`flex items-center ${className}`}>
      <div className="ml-[2px]">
        <Tri color="#606060" w={12} h={9} />
      </div>
      <span className="ml-[10px] text-[27.5px] leading-none font-bold tracking-normal text-black">{label}</span>
    </div>
  );
}

function Dialog() {
  return (
    <div className="absolute left-[476px] top-[101px] flex h-[1299px] w-[963px] flex-col bg-[#f0f0f0] text-[26px] leading-none tracking-[-0.45px] text-black shadow-[0_2px_14px_rgba(0,0,0,0.35)]">
      <div className="flex h-[63px] shrink-0 items-center bg-white pl-[16px]">
        <QLogo size={34} />
        <span className="ml-[7px] text-[25px] tracking-[-0.2px]">Save Raster Layer as...</span>
        <svg width="22" height="22" viewBox="0 0 22 22" className="ml-auto mr-[28px] -mt-[4px]" aria-hidden>
          <path d="M1 1L21 21M21 1L1 21" stroke="#000" strokeWidth="2" />
        </svg>
      </div>
      <div className="flex min-h-0 flex-1 flex-col pl-[25px] pr-[25px]">
        <div className="mt-[29px] flex h-[30px] items-center">
          <span className="w-[171px] shrink-0 tracking-[-0.6px]">Output mode</span>
          <Radio on />
          <span className="ml-[14px] w-[129px] shrink-0">Raw data</span>
          <Radio />
          <span className="ml-[13px]">Rendered image</span>
        </div>
        <div className="mt-[17px] flex h-[41px] items-center">
          <span className="w-[171px] shrink-0">Format</span>
          <Combo value="GeoTIFF" w="w-[545px]" />
          <CheckBox className="ml-[14px]" />
          <span className="ml-[11px] tracking-normal">Create VRT</span>
        </div>
        <div className="mt-[13px] flex h-[41px] items-center">
          <span className="w-[171px] shrink-0">File name</span>
          <div className="flex h-[41px] w-[682px] shrink-0 items-center justify-between overflow-hidden rounded-[2px] border border-[#bdbdbd] bg-white pr-[12px] tracking-normal whitespace-nowrap">
            <span>PhD Year 3\RM03\rm03_hk394_sup2\Urban_2018.tif</span>
            <svg width="26" height="22" viewBox="0 0 26 22" className="shrink-0" aria-hidden>
              <path d="M7 1H25V21H7L1 11Z" fill="#a0a0a0" />
              <path d="M11 6L20 16M20 6L11 16" stroke="#fff" strokeWidth="2" />
            </svg>
          </div>
          <Button label="..." w="w-[46px]" h="h-[41px]" className="ml-[14px]" />
        </div>
        <div className="mt-[13px] flex h-[40px] items-center">
          <span className="w-[171px] shrink-0">Layer name</span>
          <div className="h-[40px] w-[742px] rounded-[2px] border border-[#bdbdbd] bg-[#efefef]" />
        </div>
        <div className="mt-[14px] flex h-[42px] items-center">
          <span className="w-[171px] shrink-0">CRS</span>
          <Combo value="EPSG:4326 - WGS 84" w="w-[692px]" h="h-[42px]" />
          <div className="ml-[6px] flex h-[42px] w-[44px] items-center justify-center rounded-[2px] border border-[#bdbdbd] bg-gradient-to-b from-white to-[#f0f0f0]">
            <Ic w={34} h={34}>
              <circle cx="16" cy="15" r="13" fill="#a7c3e0" stroke="#7a7a7a" />
              <path d="M16 2V28M3 12H29M8 4C5 12 8 24 14 28M24 4C27 12 24 24 18 28" fill="none" stroke="#7a7a7a" />
              <path d="M3 12L16 2L29 12Z" fill="#d9d9d9" stroke="#7a7a7a" />
              <rect x="21" y="17" width="13" height="16" rx="2" fill="#c9a200" />
              <path d="M24 30L31 20" stroke="#fff" strokeWidth="2.5" />
            </Ic>
          </div>
        </div>
        <div className="mt-[18px] flex h-[30px] items-center">
          <CheckBox checked />
          <span className="ml-[12px] tracking-[-0.3px]">Add saved file to map</span>
        </div>

        <div className="mt-[18px] flex h-[805px] shrink-0">
          <div className="w-[875px] shrink-0 overflow-hidden">
            <SectionHead label="Extent (current: layer)" className="h-[37px]" />
            <div className="ml-[1px] h-[295px] border border-[#dcdcdc] bg-[#ececec]">
              <div className="mt-[21px] flex h-[41px] items-center">
                <span className="w-[336px] shrink-0 text-right">North</span>
                <div className="ml-[14px]">
                  <Input value="359223.241183900" w="w-[243px]" />
                </div>
              </div>
              <div className="mt-[13px] flex h-[41px] items-center">
                <span className="w-[79px] shrink-0 text-right">West</span>
                <div className="ml-[14px]">
                  <Input value="211290.798000130" w="w-[243px]" />
                </div>
                <span className="w-[257px] shrink-0 text-right">East</span>
                <div className="ml-[14px]">
                  <Input value="236760.798000130" w="w-[243px]" />
                </div>
              </div>
              <div className="mt-[13px] flex h-[41px] items-center">
                <span className="w-[336px] shrink-0 text-right">South</span>
                <div className="ml-[14px]">
                  <Input value="322863.241183900" w="w-[243px]" />
                </div>
              </div>
              <div className="mt-[34px] flex items-center pl-[41px]">
                <Button label="Current Layer Extent" w="w-[231px]" className="tracking-normal" />
                <div className="ml-[25px] flex h-[47px] w-[284px] shrink-0 items-center justify-between rounded-[2px] border border-[#bdbdbd] bg-gradient-to-b from-white to-[#f0f0f0] pl-[6px] pr-[6px]">
                  <span className="whitespace-nowrap">Calculate from Layer</span>
                  <Tri color="#606060" w={17} h={11} />
                </div>
                <Button label="Map Canvas Extent" w="w-[211px]" className="ml-[26px] tracking-normal" />
              </div>
            </div>
            <SectionHead label="Resolution (current: layer)" className="h-[55px] pt-[17px]" />
            <div className="ml-[1px] h-[154px] border border-[#dcdcdc] bg-[#ececec]">
              <div className="mt-[21px] flex h-[47px] items-center pl-[22px]">
                <Radio on />
                <span className="ml-[13px] w-[138px] shrink-0 tracking-[-0.65px]">Horizontal</span>
                <Input value="30" w="w-[155px]" />
                <span className="ml-[13px] w-[100px] shrink-0">Vertical</span>
                <Input value="30" w="w-[155px]" />
                <Button label="Layer Resolution" w="w-[210px]" className="ml-[14px]" />
              </div>
              <div className="mt-[14px] flex h-[47px] items-center pl-[22px]">
                <Radio />
                <span className="ml-[13px] w-[138px] shrink-0">Columns</span>
                <Input value="849" w="w-[155px]" disabled />
                <span className="ml-[13px] w-[100px] shrink-0">Rows</span>
                <Input value="1212" w="w-[155px]" disabled />
                <Button label="Layer Size" w="w-[210px]" className="ml-[14px] tracking-normal" disabled />
              </div>
            </div>
            <div className="flex h-[56px] items-center pt-[16px]">
              <div className="ml-[2px]">
                <Tri color="#606060" w={12} h={9} />
              </div>
              <CheckBox className="ml-[6px]" />
              <span className="ml-[17px] text-[27px] font-bold tracking-normal">Create Options</span>
            </div>
            <div className="ml-[1px] h-[300px] border border-[#dcdcdc] bg-[#ececec]">
              <div className="mt-[21px] flex h-[41px] items-center pl-[22px] text-[#7f7f7f]">
                <span className="w-[88px] shrink-0">Profile</span>
                <Combo value="Default" w="w-[740px]" disabled />
              </div>
              <div className="ml-[22px] mt-[13px] h-px w-[828px] bg-[#a0a0a0]" />
              <div className="ml-[22px] mt-[15px] h-[200px] w-[828px] border border-[#a8a8a8] bg-[#efefef]">
                <div className="flex h-[45px] border-b border-[#b5b5b5] bg-gradient-to-b from-white to-[#efefef] text-[#7f7f7f]">
                  <div className="flex w-[712px] items-center justify-center border-r border-[#dcdcdc] pt-[4px]">Name</div>
                  <div className="flex-1 overflow-hidden pl-[81px] pt-[4px] leading-[40px] whitespace-nowrap">Value</div>
                </div>
              </div>
            </div>
          </div>
          <div className="ml-[8px] w-[30px] shrink-0">
            <div className="flex h-full flex-col bg-[#e5e5e5]">
              <div className="flex h-[30px] items-center justify-center border-b border-[#c8c8c8] bg-white">
                <Tri dir="up" color="#555" w={17} h={10} />
              </div>
              <div className="h-[389px] border-b border-[#c8c8c8] bg-gradient-to-r from-white to-[#f7f7f7]" />
              <div className="h-[355px]" />
              <div className="flex h-[31px] items-center justify-center border-t border-[#c8c8c8] bg-white">
                <Tri dir="down" color="#555" w={17} h={10} />
              </div>
            </div>
          </div>
        </div>

        <div className="mt-[13px] flex h-[47px] justify-end">
          <div className="flex h-[47px] w-[80px] shrink-0 items-center justify-center rounded-[2px] border border-[#3a9be0] bg-gradient-to-b from-[#f2f8fc] to-[#e4eff6]">OK</div>
          <Button label="Cancel" w="w-[92px]" className="ml-[13px]" />
          <Button label="Help" w="w-[80px]" className="ml-[13px]" />
        </div>
      </div>
    </div>
  );
}

function Spin({ value, w }: { value: string; w: string }) {
  return (
    <div className={`flex h-[41px] shrink-0 overflow-hidden rounded-[2px] border border-[#bdbdbd] bg-white ${w}`}>
      <div className="flex flex-1 items-center overflow-hidden pl-[2px] whitespace-nowrap">{value}</div>
      <div className="flex w-[31px] flex-col items-center justify-center gap-[8px] border-l border-[#bdbdbd] bg-[#f0f0f0]">
        <Tri dir="up" color="#606060" w={17} h={10} />
        <Tri color="#606060" w={17} h={10} />
      </div>
    </div>
  );
}

function StatusBar() {
  return (
    <div className="flex h-[54px] shrink-0 items-center border-t border-[#c8c8c8] bg-[#f0f0f0] text-[24px] leading-none tracking-[-0.6px] text-black">
      <div className="ml-[5px] flex h-[40px] w-[490px] shrink-0 items-center rounded-[2px] border border-[#bdbdbd] bg-white pl-[14px] text-[26px] tracking-[0.15px] text-[#7f7f7f]">
        <svg width="26" height="26" viewBox="0 0 26 26" aria-hidden>
          <circle cx="10" cy="10" r="8" fill="none" stroke="#8a8a8a" strokeWidth="2.5" />
          <path d="M16 16L25 25" stroke="#8a8a8a" strokeWidth="3" />
        </svg>
        <span className="ml-[8px]">Type to locate (Ctrl+K)</span>
      </div>
      <span className="ml-[187px] w-[115px] shrink-0 whitespace-nowrap">Coordinate</span>
      <div className="ml-[3px] flex h-[37px] w-[172px] shrink-0 items-center rounded-[2px] border border-[#bdbdbd] bg-white pl-[3px] text-[23px] tracking-normal whitespace-nowrap">197128,338442</div>
      <div className="ml-[4px]">
        <Ic w={36} h={38}>
          <ellipse cx="14" cy="14" rx="7" ry="12" fill="#fff" stroke="#222" strokeWidth="2.5" transform="rotate(-15 14 14)" />
          <path d="M12 6L16 20" stroke="#222" strokeWidth="3" />
          <ellipse cx="20" cy="27" rx="8" ry="10" fill="#ddd" stroke="#222" strokeWidth="2" />
          <circle cx="20" cy="28" r="3" fill="none" stroke="#222" strokeWidth="2" />
          <path d="M28 8L31 6M31 14L35 13" stroke="#333" strokeWidth="2" />
        </Ic>
      </div>
      <span className="ml-[14px] w-[54px] shrink-0">Scale</span>
      <div className="ml-[4px] flex h-[41px] w-[175px] shrink-0 items-center rounded-[2px] border border-[#bdbdbd] bg-white pl-[4px] text-[23px] tracking-normal">
        <span className="flex-1">1:1000000</span>
        <div className="flex h-full w-[40px] items-center justify-center bg-[#f0f0f0]">
          <Tri color="#606060" w={17} h={11} />
        </div>
      </div>
      <div className="ml-[15px]">
        <svg width="28" height="36" viewBox="0 0 28 36" aria-hidden>
          <path d="M6 16V9C6 -1 22 -1 22 9V16M9 16V9C9 3 19 3 19 9V16" fill="none" stroke="#808080" strokeWidth="2" />
          <rect y="15" width="28" height="21" rx="3" fill="#707070" />
        </svg>
      </div>
      <span className="ml-[11px] w-[97px] shrink-0 whitespace-nowrap">Magnifier</span>
      <div className="ml-[4px]">
        <Spin value="100%" w="w-[139px]" />
      </div>
      <span className="ml-[9px] w-[88px] shrink-0">Rotation</span>
      <div className="ml-[9px]">
        <Spin value="0.0 °" w="w-[134px]" />
      </div>
      <CheckBox checked className="ml-[7px]" />
      <span className="ml-[12px] w-[78px] shrink-0">Render</span>
      <div className="ml-[15px]">
        <Ic w={28} h={28}>
          <circle cx="14" cy="14" r="12" fill="#d5d5d5" />
          <path d="M2 2L26 26M26 2L2 26" stroke="#707070" strokeWidth="3.5" />
        </Ic>
      </div>
      <div className="ml-[44px]">
        <Ic w={30} h={28}>
          <path d="M15 1C6 1 1 6 1 13C1 20 6 24 14 24L24 28L23 22C27 20 29 17 29 13C29 6 24 1 15 1Z" fill="#606060" />
          <circle cx="8" cy="13" r="2.2" fill="#fff" />
          <circle cx="15" cy="13" r="2.2" fill="#fff" />
          <circle cx="22" cy="13" r="2.2" fill="#fff" />
        </Ic>
      </div>
    </div>
  );
}

const MENU: [string, string, string][] = [
  ["Pro", "j", "ect"],
  ["", "E", "dit"],
  ["", "V", "iew"],
  ["", "L", "ayer"],
  ["", "S", "ettings"],
  ["", "P", "lugins"],
  ["Vect", "o", "r"],
  ["", "R", "aster"],
  ["", "D", "atabase"],
  ["", "W", "eb"],
  ["Pro", "c", "essing"],
  ["", "H", "elp"],
];

export default function App() {
  return (
    <div className={`relative flex h-[1468px] w-[2048px] flex-col overflow-hidden bg-[#f0f0f0] ${FONT}`}>
      <div className="flex h-[51px] shrink-0 items-center bg-white">
        <div className="ml-[3px]">
          <QLogo size={34} />
        </div>
        <span className="ml-[6px] text-[26px] leading-none tracking-[-0.4px] text-[#8f8f8f]">*supervision2 - QGIS</span>
        <div className="ml-auto flex items-center">
          <div className="h-[2px] w-[20px] bg-[#999]" />
          <svg width="22" height="22" viewBox="0 0 22 22" className="ml-[84px]" aria-hidden>
            <path d="M5 5V1H20V16H16M1 6H16V21H1Z" fill="none" stroke="#999" strokeWidth="2" />
          </svg>
          <svg width="22" height="22" viewBox="0 0 22 22" className="ml-[84px] mr-[44px]" aria-hidden>
            <path d="M1 1L21 21M21 1L1 21" stroke="#999" strokeWidth="1.6" />
          </svg>
        </div>
      </div>
      <div className="flex h-[42px] shrink-0 items-center gap-[20.5px] border-b-2 border-[#d8d8d8] pl-[17px] text-[26px] leading-none tracking-[-0.4px] text-[#969696]">
        {MENU.map(([a, b, c]) => (
          <span key={a + b + c}>
            {a}
            <u>{b}</u>
            {c}
          </span>
        ))}
      </div>
      <div className="flex h-[71px] shrink-0 items-center border-b-2 border-[#cfcfcf] bg-gradient-to-b from-[#fafafa] to-[#efefef]">
        <Row1Left />
        <Row1Right />
      </div>
      <div className="flex h-[71px] shrink-0 items-center border-b-2 border-[#cfcfcf] bg-gradient-to-b from-[#fafafa] to-[#efefef]">
        <Row2Left />
        <Row2Right />
      </div>
      <div className="flex h-[71px] shrink-0 items-center border-b-2 border-[#c4c4c4] bg-gradient-to-b from-[#fafafa] to-[#efefef]">
        <Row3 />
      </div>
      <div className="flex min-h-0 flex-1">
        <div className="flex w-[466px] shrink-0 flex-col">
          <BrowserDock />
          <LayersDock />
        </div>
        <div className="relative ml-[4px] min-w-0 flex-1 border-l border-[#c8c8c8] bg-white">
          <Raster />
        </div>
      </div>
      <StatusBar />
      <Dialog />
    </div>
  );
}
